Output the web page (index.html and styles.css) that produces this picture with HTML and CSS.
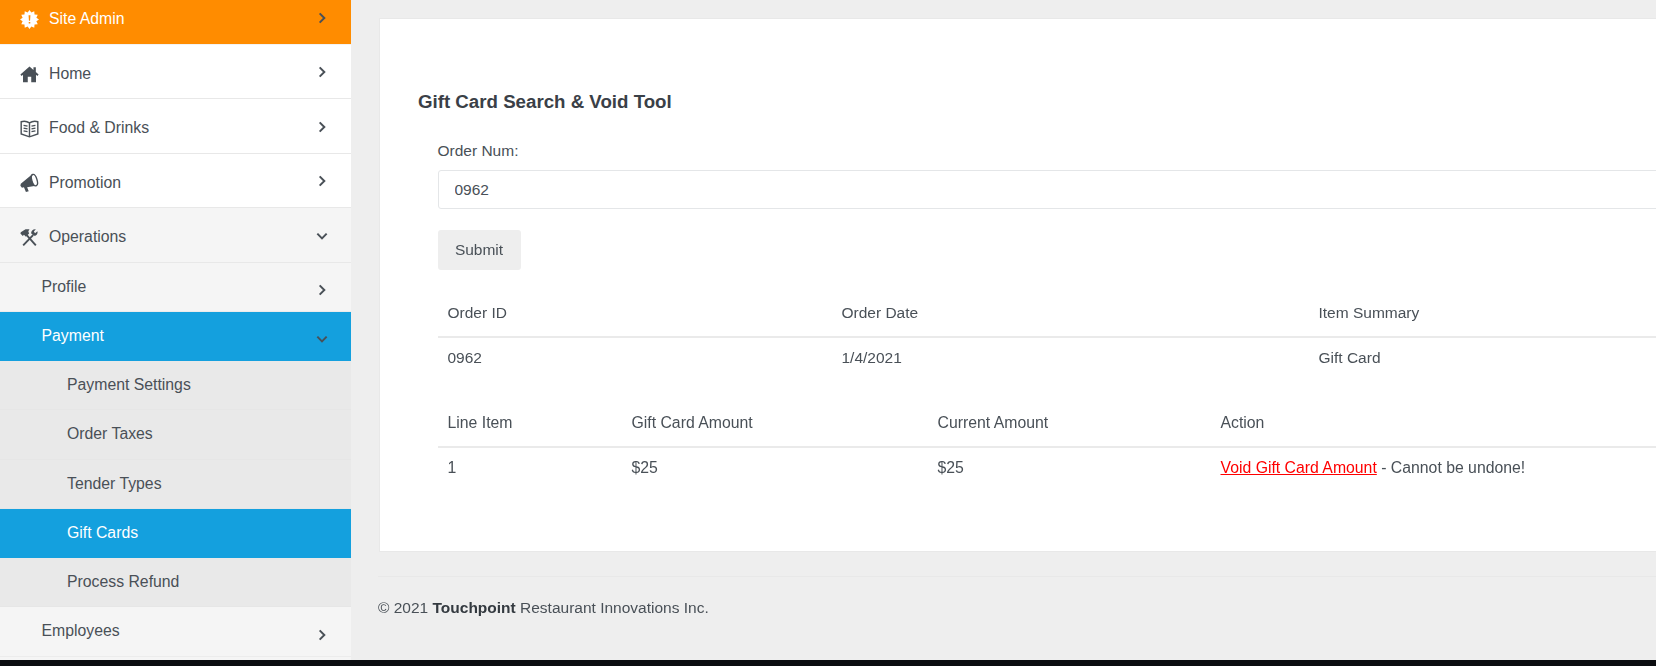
FILE: index.html
```html
<!DOCTYPE html>
<html lang="en">
<head>
<meta charset="utf-8">
<title>Gift Card Search &amp; Void Tool</title>
<link rel="stylesheet" href="styles.css">
</head>
<body>
<div class="app">
  <aside class="sidebar">
    <nav class="nav">
      <a class="row top admin">
        <span class="label">
          <svg class="icon" viewBox="0 0 24 24"><path fill="currentColor" fill-rule="evenodd" d="M12 0L14.33 3.31 18 1.61 18.36 5.64 22.39 6 20.69 9.67 24 12 20.69 14.33 22.39 18 18.36 18.36 18 22.39 14.33 20.69 12 24 9.67 20.69 6 22.39 5.64 18.36 1.61 18 3.31 14.33 0 12 3.31 9.67 1.61 6 5.64 5.64 6 1.61 9.67 3.31ZM10.8 6.500l.5 7h1.400l.5-7ZM11 15v2.200h2V15Z"/></svg>
          Site Admin
        </span>
        <svg class="chev" viewBox="0 0 10 12"><path d="M3 2l4 4-4 4"/></svg>
      </a>
      <a class="row top">
        <span class="label">
          <svg class="icon" viewBox="0 0 24 24"><path fill="currentColor" d="M12 3L0.500 13.200 2 15l1.800-1.500V23h6v-7h4.400v7h6v-9.500L22 15l1.500-1.800L20 10.100V4h-3v3.500Z"/></svg>
          Home
        </span>
        <svg class="chev" viewBox="0 0 10 12"><path d="M3 2l4 4-4 4"/></svg>
      </a>
      <a class="row top">
        <span class="label">
          <svg class="icon" viewBox="0 0 24 24"><path fill="none" stroke="currentColor" stroke-width="1.800" d="M1.500 3.500C5 2.500 9 3 12 5c3-2 7-2.500 10.500-1.500v15.500L12 22.500 1.500 19ZM12 5v17.500M4.500 8l5 1M4.500 11.500l5 1M4.500 15l5 1M19.500 8l-5 1M19.500 11.500l-5 1M19.500 15l-5 1"/></svg>
          Food &amp; Drinks
        </span>
        <svg class="chev" viewBox="0 0 10 12"><path d="M3 2l4 4-4 4"/></svg>
      </a>
      <a class="row top">
        <span class="label">
          <svg class="icon" viewBox="0 0 24 24"><path fill="currentColor" d="M1 13.500L15.500 1.500 20 16 9 18l2 5-3.500 1-2.500-6-2.500 0.500L0.500 16Z"/><ellipse cx="18.200" cy="9" rx="3.300" ry="7.500" transform="rotate(-17 18.200 9)" fill="#fff" stroke="currentColor" stroke-width="1.800"/></svg>
          Promotion
        </span>
        <svg class="chev" viewBox="0 0 10 12"><path d="M3 2l4 4-4 4"/></svg>
      </a>
      <a class="row top open">
        <span class="label">
          <svg class="icon" viewBox="0 0 24 24"><path fill="none" stroke="currentColor" stroke-width="2.400" d="M4 22L16.500 9"/><path fill="none" stroke="currentColor" stroke-width="2.400" d="M20 22L8.500 9"/><path fill="currentColor" d="M1 5.500L7 1.500h5l-1.500 2.500 1 3-4 4L5 8.500 3.500 10 0.500 7ZM14 6.500c0-3 2.500-5.500 6-5L17.500 4.500l1.500 2 3-2.500c1 3.500-2 6.500-5 5.500Z"/></svg>
          Operations
        </span>
        <svg class="chev" viewBox="0 0 12 10"><path d="M2 3l4 4 4-4"/></svg>
      </a>
      <a class="row sub">Profile<svg class="chev" viewBox="0 0 10 12"><path d="M3 2l4 4-4 4"/></svg></a>
      <a class="row sub active">Payment<svg class="chev" viewBox="0 0 12 10"><path d="M2 3l4 4 4-4"/></svg></a>
      <a class="row leaf">Payment Settings</a>
      <a class="row leaf">Order Taxes</a>
      <a class="row leaf">Tender Types</a>
      <a class="row leaf active">Gift Cards</a>
      <a class="row leaf">Process Refund</a>
      <a class="row sub">Employees<svg class="chev" viewBox="0 0 10 12"><path d="M3 2l4 4-4 4"/></svg></a>
    </nav>
  </aside>
  <main class="main">
    <section class="card">
      <h1 class="title">Gift Card Search &amp; Void Tool</h1>
      <div class="body">
        <form class="form">
          <label class="field-label" for="order">Order Num:</label>
          <input class="input" id="order" type="text" value="0962">
          <button class="btn" type="button">Submit</button>
        </form>
        <table class="table orders">
          <colgroup><col class="c-id"><col class="c-date"><col></colgroup>
          <thead><tr><th>Order ID</th><th>Order Date</th><th>Item Summary</th></tr></thead>
          <tbody><tr><td>0962</td><td>1/4/2021</td><td>Gift Card</td></tr></tbody>
        </table>
        <table class="table lines">
          <colgroup><col class="c-line"><col class="c-amount"><col class="c-current"><col></colgroup>
          <thead><tr><th>Line Item</th><th>Gift Card Amount</th><th>Current Amount</th><th>Action</th></tr></thead>
          <tbody><tr><td>1</td><td>$25</td><td>$25</td><td><a class="void">Void Gift Card Amount</a> - Cannot be undone!</td></tr></tbody>
        </table>
      </div>
    </section>
    <footer class="footer">© 2021 <strong>Touchpoint</strong> Restaurant Innovations Inc.</footer>
  </main>
</div>
<div class="strip"></div>
</body>
</html>
```
FILE: styles.css
```css
* { box-sizing: border-box; }
html, body { margin: 0; height: 100%; overflow: hidden; }
body {
  display: flex;
  flex-direction: column;
  width: 1656px;
  height: 666px;
  background: #eee;
  color: #495057;
  font: 15.5px/20px "Liberation Sans", Arial, sans-serif;
}
.app { display: flex; height: 660px; overflow: hidden; filter: blur(0.5px); }
.strip { height: 6px; background: #0b0d10; }

.sidebar { width: 351px; flex: none; height: 660px; overflow: hidden; background: #f5f5f5; font-size: 15.800px; }
.nav { margin-top: -10px; display: flex; flex-direction: column; }
.row { display: flex; align-items: center; justify-content: space-between; flex: none; color: #495057; }
.top { height: 54.5px; padding: 5px 22px 0 20px; background: #fff; border-bottom: 1px solid #e8e8e8; }
.top.open { background: #f5f5f5; }
.top.admin { background: #ff8c00; color: #fff; border-bottom-color: #f3f3f3; }
.label { display: flex; align-items: center; gap: 10px; }
.icon { width: 19px; height: 19px; flex: none; }
.chev { width: 14px; height: 14px; flex: none; margin-top: -3px; fill: none; stroke: #495057; stroke-width: 1.700; }
.sub { height: 49.250px; padding: 0 22px 0 41.500px; background: #f5f5f5; border-bottom: 1px solid #ececec; }
.sub .chev { margin-top: 7px; }
.leaf { height: 49.250px; padding-left: 67px; background: #e9e9e9; border-bottom: 1px solid #e6e6e6; }
.row.active { background: #14a0de; color: #fff; border-bottom-color: #14a0de; }

.main { flex: 1; min-width: 0; padding: 18px 0 0 27px; overflow: hidden; }
.card { width: 1400px; height: 534px; margin-left: 1px; padding: 72px 0 0 38px; background: #fff; border: 1px solid #e8e8e8; }
.title { margin: 0; font-size: 18.700px; line-height: 22px; font-weight: 700; color: #3a4047; }
.body { padding: 28px 0 0 19.500px; }
.form { display: flex; flex-direction: column; align-items: flex-start; }
.field-label { margin-bottom: 9px; }
.input { width: 1300px; height: 39px; padding: 0 16px; border: 1px solid #e4e6e8; border-radius: 3px; background: #fff; color: #495057; font: inherit; }
.btn { margin-top: 20.500px; min-width: 83px; height: 40px; padding: 0 16px; border: 0; border-radius: 3px; background: #eee; color: #495057; font: inherit; }

.table { width: 1300px; table-layout: fixed; border-collapse: collapse; }
.table th { padding: 12px 10px 13px; font-weight: 400; text-align: left; border-bottom: 2px solid #eaeaea; }
.table td { padding: 10px; }
.orders { margin-top: 21px; }
.lines { margin-top: 23px; font-size: 15.800px; }
.c-id { width: 394px; }
.c-date { width: 477px; }
.c-line { width: 184px; }
.c-amount { width: 306px; }
.c-current { width: 283px; }
.void { color: #f00; text-decoration: underline; }

.footer { margin-top: 24px; padding-top: 21px; border-top: 1px solid #e8e8e8; color: #495057; }
.footer strong { color: #343a40; }
```
